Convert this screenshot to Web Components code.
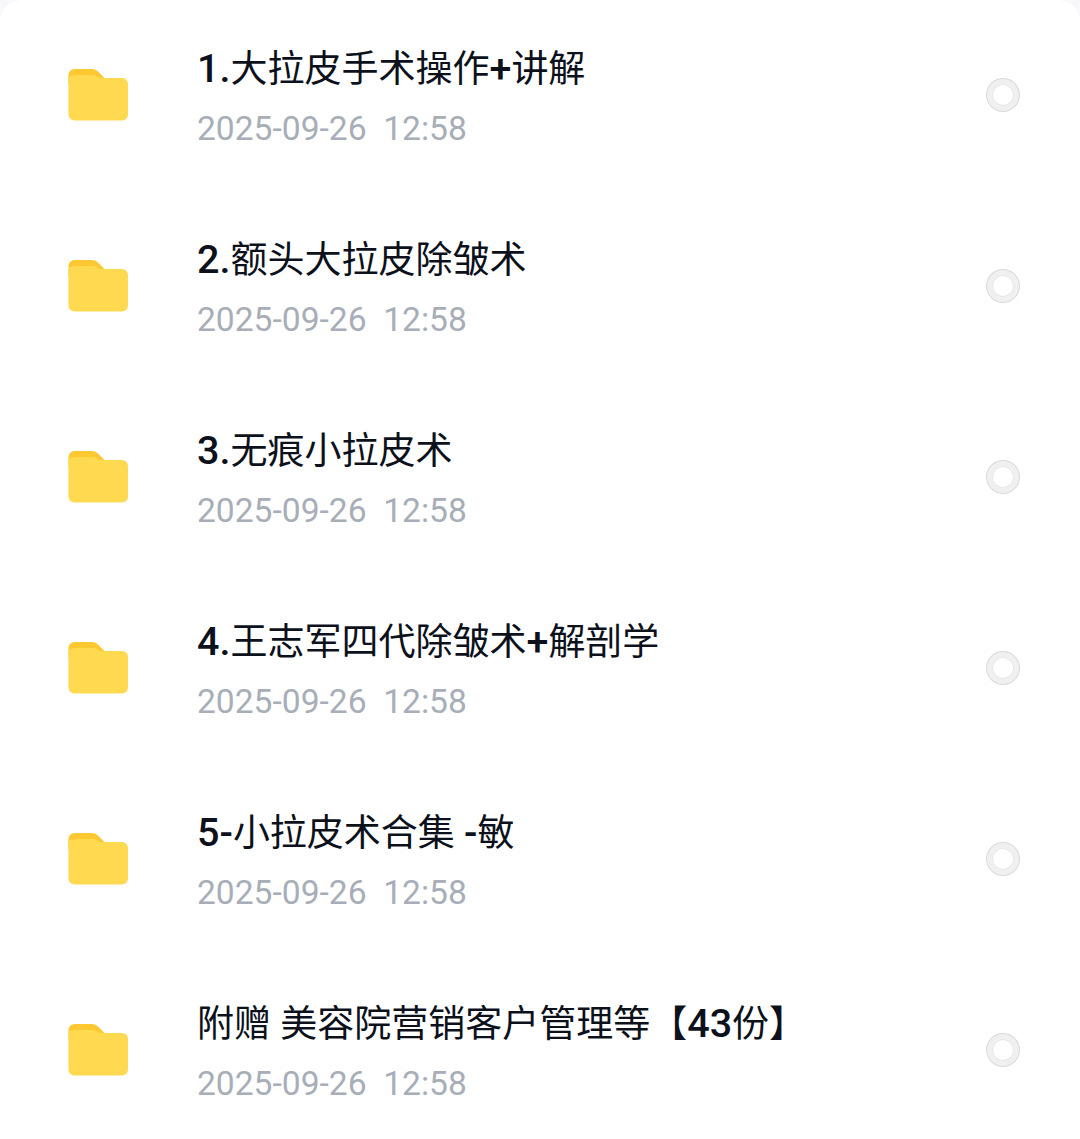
<!DOCTYPE html>
<html lang="zh">
<head>
<meta charset="utf-8">
<title>文件列表</title>
<style>
    html, body { margin: 0; padding: 0; background: #f8f8fb; }
    body { width: 1080px; height: 1139px; overflow: hidden; font-family: Roboto, "Noto Sans CJK SC", sans-serif; }
</style>
</head>
<body>
<file-list>
    <file-row time="2025-09-26  12:58"><b>1.</b>大拉皮手术操作<b>+</b>讲解</file-row>
    <file-row time="2025-09-26  12:58"><b>2.</b>额头大拉皮除皱术</file-row>
    <file-row time="2025-09-26  12:58"><b>3.</b>无痕小拉皮术</file-row>
    <file-row time="2025-09-26  12:58"><b>4.</b>王志军四代除皱术<b>+</b>解剖学</file-row>
    <file-row time="2025-09-26  12:58"><b>5-</b>小拉皮术合集 <b>-</b>敏</file-row>
    <file-row time="2025-09-26  12:58">附赠 美容院营销客户管理等【<b>43</b>份】</file-row>
</file-list>

<script>
class FileList extends HTMLElement {
    constructor() {
        super();
        this.attachShadow({ mode: "open" }).innerHTML = `
        <style>
            :host {
                display: flex;
                flex-direction: column;
                width: 1080px;
                height: 1139px;
                box-sizing: border-box;
                background: #fff;
                border-radius: 22px 22px 0 0;
            }
        </style>
        <slot></slot>`;
    }
}

class FolderIcon extends HTMLElement {
    constructor() {
        super();
        this.attachShadow({ mode: "open" }).innerHTML = `
        <style>
            :host { display: block; width: 60px; height: 52px; }
            svg { display: block; }
        </style>
        <svg width="60" height="52" viewBox="0 0 60 52.500" preserveAspectRatio="none">
            <path fill="#fdc832" d="M0.5 6a6 6 0 0 1 6-6h17c3 0 5 1 7 3l6 6v8h-36z"/>
            <path fill="#ffd94f" d="M0.5 9h53.5a6 6 0 0 1 6 6v31a6 6 0 0 1-6 6H6.500a6 6 0 0 1-6-6z"/>
            <path fill="#ffd94f" d="M0.5 9V7.500c4-1.500 8-1.500 12-1.500h12c3 0 5 1 7 3v5H0.500z"/>
        </svg>`;
    }
}

class FileRow extends HTMLElement {
    constructor() {
        super();
        this.attachShadow({ mode: "open" }).innerHTML = `
        <style>
            :host {
                display: flex;
                align-items: center;
                height: 191px;
                box-sizing: border-box;
                padding: 0 60px 0 68px;
                flex: none;
            }
            folder-icon { flex: none; margin-right: 70px; margin-top: -2px; }
            .text { flex: 1; min-width: 0; margin-left: -1px; }
            .name {
                font-size: 37px;
                line-height: 44px;
                color: #0c111b;
                white-space: nowrap;
                margin-bottom: 17px;
                margin-top: 5px;
            }
            ::slotted(b) { font-weight: 500; font-size: 39.5px; line-height: 1; }
            .time {
                font-size: 33.6px;
                line-height: 40px;
                color: #a7aeb8;
                white-space: pre;
            }
            .radio {
                flex: none;
                width: 32px;
                height: 32px;
                box-sizing: border-box;
                border: 5.5px solid #f0f0f0;
                border-radius: 50%;
                background: #fff;
                box-shadow: 0 0 0 1px #dadada, inset 0 0 0 1px #e6e6e6;
                margin: -2px 1px 0 0;
            }
        </style>
        <folder-icon></folder-icon>
        <div class="text">
            <div class="name"><slot></slot></div>
            <div class="time"></div>
        </div>
        <div class="radio"></div>`;
    }

    connectedCallback() {
        this.shadowRoot.querySelector(".time").textContent = this.getAttribute("time");
    }
}

customElements.define("folder-icon", FolderIcon);
customElements.define("file-row", FileRow);
customElements.define("file-list", FileList);
</script>
</body>
</html>
